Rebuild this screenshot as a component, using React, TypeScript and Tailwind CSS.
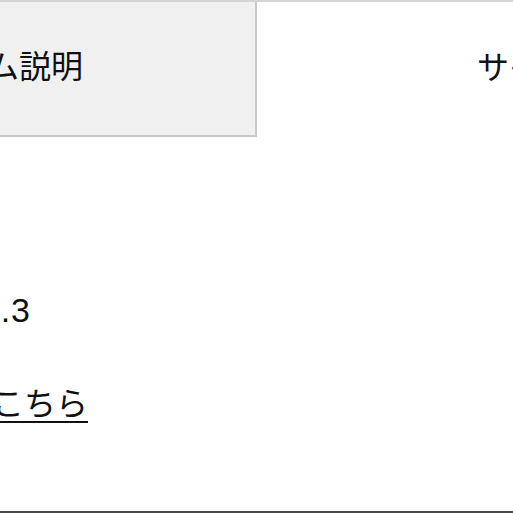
export default function App() {
  return (
    <div
      className="relative h-[513px] w-[513px] overflow-hidden bg-white text-[#111]"
      style={{ fontFamily: '"Liberation Sans", "Noto Sans CJK JP", sans-serif' }}
    >
      {/* Tabs */}
      <div className="flex h-[137px] border-t-2 border-[#d4d4d4]">
        <div className="flex w-[257px] shrink-0 items-center justify-end whitespace-nowrap border-r-2 border-b-2 border-[#c9c9c9] bg-[#f0f0f0] pr-[172px] pb-[4px] text-[32px]">
          ゲーム説明
        </div>
        <div className="flex flex-1 items-center whitespace-nowrap pl-[220px] pb-[4px] text-[32px]">
          サイト情報
        </div>
      </div>

      {/* Content */}
      <div className="mt-[153px] flex w-[31px] justify-end whitespace-nowrap text-[34px] leading-[40px] tracking-[1px]">
        バージョン 1.3
      </div>
      <div className="mt-[54px] flex w-[88px] justify-end whitespace-nowrap text-[32px] leading-[40px]">
        <span className="underline decoration-2 underline-offset-[6px]">詳しくはこちら</span>
      </div>

      <div className="absolute bottom-0 left-0 h-[2px] w-full bg-[#474747]" />
    </div>
  );
}
